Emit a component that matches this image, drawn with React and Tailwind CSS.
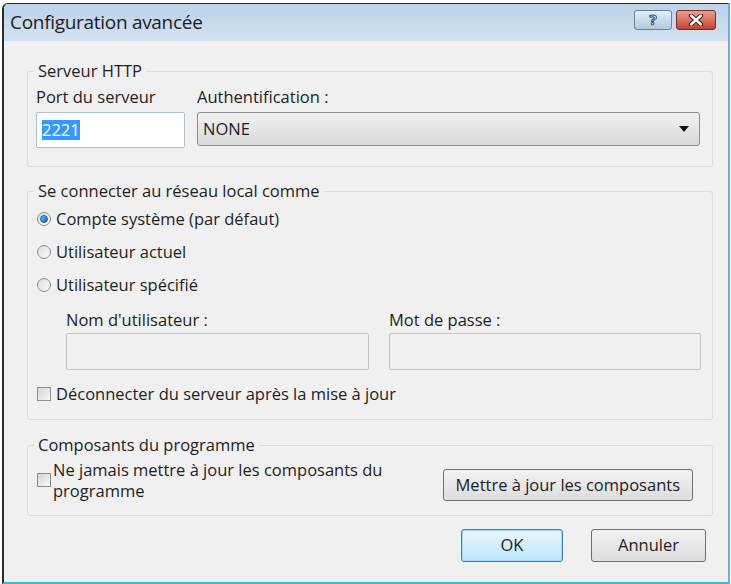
import React from 'react';

const font = { fontFamily: '"Open Sans", "Noto Sans", sans-serif' };

const Radio = ({ checked, label }) => (
    <div className="flex items-center gap-[5px] h-[22px]">
        <span className="w-[14px] h-[14px] rounded-full border border-[#8e8f8f] bg-gradient-to-br from-[#dcdcdc] to-[#fbfbfb] flex items-center justify-center">
            {checked && <span className="w-[8px] h-[8px] rounded-full bg-gradient-to-br from-[#7bc3f5] to-[#1a5fa8] border border-[#1d5a93]" />}
        </span>
        <span className="text-[16.5px] text-[#1e1e1e]">{label}</span>
    </div>
);

const Check = () => (
    <span className="block w-[14px] h-[14px] shrink-0 border border-[#8e8f8f] bg-gradient-to-br from-[#d6d6d6] to-[#f7f7f7]" />
);

const Group = ({ title, className, children }) => (
    <div className={`relative border border-[#dcdcdc] rounded-[3px] ${className}`}>
        <span className="absolute -top-[12px] left-[6px] px-[4px] bg-[#f0f0f0] text-[16.5px] leading-[22px] text-[#1e1e1e]">{title}</span>
        {children}
    </div>
);

export default function App() {
    return (
        <div className="w-[731px] h-[584px] bg-white overflow-hidden" style={font}>
            <div className="ml-[2px] mt-[3px] w-[728px] h-[581px] border-l-2 border-t border-[#2b2b2b] border-r-2 border-r-[#6fb0df] border-b-2 border-b-[#3cbfcf] rounded-tl-[6px] flex flex-col bg-[#f0f0f0]">
                <div className="h-[37px] shrink-0 bg-gradient-to-b from-[#bcd2e8] to-[#d3e2f1] flex items-center justify-between pl-[6px] pr-[12px] rounded-tl-[5px]">
                    <span className="text-[19px] text-[#1c1c1c] tracking-[-0.3px]">Configuration avancée</span>
                    <div className="flex gap-[4px] -mt-[6px]">
                        <div className="w-[38px] h-[20px] rounded-[3px] border border-[#6d7f93] bg-gradient-to-b from-[#e4eef8] to-[#b5c9dd] flex items-center justify-center text-[15px] font-bold text-white [-webkit-text-stroke:1px_#34475e] leading-none">?</div>
                        <div className="w-[40px] h-[20px] rounded-[3px] border border-[#7a2b22] bg-gradient-to-b from-[#e8a190] to-[#c2412e] flex items-center justify-center">
                            <svg width="16" height="12" viewBox="0 0 16 12">
                                <path d="M3 1.5 L13 10.5 M13 1.5 L3 10.5" stroke="#3a1a14" strokeWidth="4.4" strokeLinecap="round" />
                                <path d="M3 1.5 L13 10.5 M13 1.5 L3 10.5" stroke="#ffffff" strokeWidth="2.4" strokeLinecap="round" />
                            </svg>
                        </div>
                    </div>
                </div>

                <div className="flex-1 pl-[23px] pr-[15px] pt-[30px] flex flex-col">
                    <Group title="Serveur HTTP" className="h-[96px] pl-[8px] pr-[12px] pt-[14px]">
                        <div className="flex gap-[12px]">
                            <div className="flex flex-col w-[149px]">
                                <span className="text-[16.5px] leading-[22px] text-[#1e1e1e]">Port du serveur</span>
                                <div className="mt-[4px] h-[36px] border border-[#abc1d6] bg-white rounded-[2px] flex items-center px-[5px]">
                                    <span className="bg-[#3399ff] text-white text-[16.5px] leading-[20px]">2221</span>
                                </div>
                            </div>
                            <div className="flex flex-col flex-1">
                                <span className="text-[16.5px] leading-[22px] text-[#1e1e1e]">Authentification :</span>
                                <div className="mt-[4px] h-[34px] border border-[#8e8f8f] rounded-[3px] bg-gradient-to-b from-[#f2f2f2] to-[#d9d9d9] flex items-center justify-between pl-[5px] pr-[10px]">
                                    <span className="text-[16.5px] text-[#1e1e1e]">NONE</span>
                                    <svg width="10" height="6" viewBox="0 0 10 6"><path d="M0 0 H10 L5 6 Z" fill="#111" /></svg>
                                </div>
                            </div>
                        </div>
                    </Group>

                    <Group title="Se connecter au réseau local comme" className="mt-[24px] h-[229px] pl-[9px] pr-[11px] pt-[16px]">
                        <div className="flex flex-col gap-[11px]">
                            <Radio checked label="Compte système (par défaut)" />
                            <Radio label="Utilisateur actuel" />
                            <Radio label="Utilisateur spécifié" />
                        </div>
                        <div className="flex gap-[20px] pl-[29px] mt-[13px]">
                            <div className="flex flex-col w-[303px]">
                                <span className="text-[16.5px] leading-[22px] text-[#1e1e1e]">Nom d'utilisateur :</span>
                                <div className="mt-[2px] h-[37px] border border-[#c4c4c4] rounded-[2px] bg-[#f0f0f0]" />
                            </div>
                            <div className="flex flex-col flex-1">
                                <span className="text-[16.5px] leading-[22px] text-[#1e1e1e]">Mot de passe :</span>
                                <div className="mt-[2px] h-[37px] border border-[#c4c4c4] rounded-[2px] bg-[#f0f0f0]" />
                            </div>
                        </div>
                        <div className="flex items-center gap-[5px] mt-[12px]">
                            <Check />
                            <span className="text-[16.5px] text-[#1e1e1e]">Déconnecter du serveur après la mise à jour</span>
                        </div>
                    </Group>

                    <Group title="Composants du programme" className="mt-[25px] h-[71px] pl-[9px] pr-[19px] pt-[13px]">
                        <div className="flex items-start justify-between">
                            <div className="flex items-start gap-[2px]">
                                <div className="pt-[14px]"><Check /></div>
                                <span className="text-[16.5px] leading-[21px] text-[#1e1e1e] w-[340px]">Ne jamais mettre à jour les composants du programme</span>
                            </div>
                            <div className="mt-[10px] h-[32px] px-[12px] border border-[#707070] rounded-[3px] bg-gradient-to-b from-[#f2f2f2] to-[#dddddd] flex items-center text-[16.5px] text-[#1e1e1e]">
                                Mettre à jour les composants
                            </div>
                        </div>
                    </Group>

                    <div className="flex justify-end gap-[28px] mt-[13px] pr-[7px]">
                        <div className="w-[102px] h-[33px] rounded-[3px] border border-[#3c7fb1] bg-gradient-to-b from-[#eaf6fd] to-[#bee6fd] shadow-[inset_0_0_0_1px_#9fdcf7] flex items-center justify-center text-[16.5px] text-[#1e1e1e]">OK</div>
                        <div className="w-[115px] h-[33px] rounded-[3px] border border-[#707070] bg-gradient-to-b from-[#f2f2f2] to-[#dddddd] flex items-center justify-center text-[16.5px] text-[#1e1e1e]">Annuler</div>
                    </div>
                </div>
            </div>
        </div>
    );
}
